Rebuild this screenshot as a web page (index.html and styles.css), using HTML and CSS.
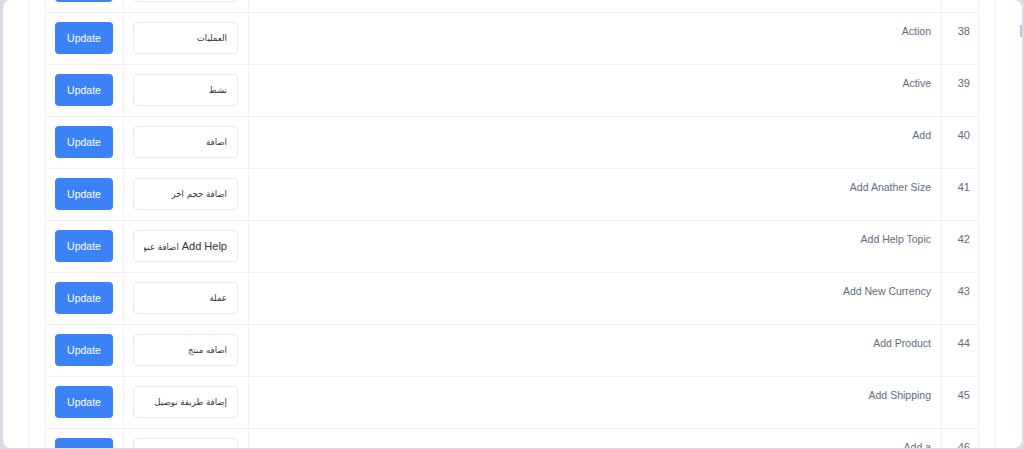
FILE: index.html
```html
<!DOCTYPE html>
<html lang="ar">
<head>
<meta charset="utf-8">
<title>Translations</title>
<link rel="stylesheet" href="styles.css">
</head>
<body>
<div class="page">
  <div class="card">
    <span class="thumb"></span>
    <div class="panel">
      <table class="grid" dir="rtl">
        <colgroup>
          <col class="col-num"><col class="col-label"><col class="col-input"><col class="col-btn">
        </colgroup>
        <tbody>
          <tr><td class="num">37</td><td class="label">Accept</td><td class="field"><div class="inp"><span class="ar">قبول</span></div></td><td class="act"><button class="btn">Update</button></td></tr>
          <tr><td class="num">38</td><td class="label">Action</td><td class="field"><div class="inp"><span class="ar">العمليات</span></div></td><td class="act"><button class="btn">Update</button></td></tr>
          <tr><td class="num">39</td><td class="label">Active</td><td class="field"><div class="inp"><span class="ar">نشط</span></div></td><td class="act"><button class="btn">Update</button></td></tr>
          <tr><td class="num">40</td><td class="label">Add</td><td class="field"><div class="inp"><span class="ar">اضافة</span></div></td><td class="act"><button class="btn">Update</button></td></tr>
          <tr><td class="num">41</td><td class="label">Add Anather Size</td><td class="field"><div class="inp"><span class="ar">اضافة حجم اخر</span></div></td><td class="act"><button class="btn">Update</button></td></tr>
          <tr><td class="num">42</td><td class="label">Add Help Topic</td><td class="field"><div class="inp"><span class="clip"><span class="lat">Add Help</span> <span class="ar">اضافة عنوان مساعدة</span></span></div></td><td class="act"><button class="btn">Update</button></td></tr>
          <tr><td class="num">43</td><td class="label">Add New Currency</td><td class="field"><div class="inp"><span class="ar">عملة</span></div></td><td class="act"><button class="btn">Update</button></td></tr>
          <tr><td class="num">44</td><td class="label">Add Product</td><td class="field"><div class="inp"><span class="ar">اضافه منتج</span></div></td><td class="act"><button class="btn">Update</button></td></tr>
          <tr><td class="num">45</td><td class="label">Add Shipping</td><td class="field"><div class="inp"><span class="ar">إضافة طريقة توصيل</span></div></td><td class="act"><button class="btn">Update</button></td></tr>
          <tr><td class="num">46</td><td class="label">Add a</td><td class="field"><div class="inp"></div></td><td class="act"><button class="btn">Update</button></td></tr>
        </tbody>
      </table>
    </div>
  </div>
</div>
</body>
</html>
```
FILE: styles.css
```css
html, body {
  margin: 0;
  padding: 0;
}
body {
  background: #d6dde4;
  font-family: "Liberation Sans", "DejaVu Sans", Arial, sans-serif;
  font-size: 10.5px;
  overflow: hidden;
}
.page {
  height: 449px;
  padding: 0 2px 1px 3px;
  box-sizing: border-box;
}
.card {
  position: relative;
  height: 448px;
  background: #fff;
  border-radius: 8px;
  overflow: hidden;
  padding: 0 26px 0 25px;
  box-sizing: border-box;
}
.thumb {
  position: absolute;
  right: 0;
  top: 25px;
  width: 2px;
  height: 12px;
  background: #c3c3c3;
}
.panel {
  display: flow-root;
  height: 100%;
  box-sizing: border-box;
  border-left: 1px solid #eef0f5;
  border-right: 1px solid #eef0f5;
  padding: 0 16px;
}
.grid {
  width: 934px;
  margin-top: -40px;
  border-collapse: collapse;
  table-layout: fixed;
  direction: rtl;
}
.col-num { width: 37px; }
.col-input { width: 125px; }
.col-btn { width: 78px; }
.grid td {
  border: 1px solid #eef0f5;
  padding: 9px 10px 10px 9px;
  vertical-align: top;
  height: 32px;
  box-sizing: content-box;
}
.grid td.num,
.grid td.label {
  text-align: right;
  color: #5d6c80;
  line-height: 16px;
  padding-top: 10px;
  padding-bottom: 9px;
}
.grid td.num {
  padding-right: 8px;
  font-size: 11px;
}
.grid td.field, .grid td.act {
  vertical-align: middle;
}
.inp {
  display: flex;
  align-items: center;
  justify-content: flex-start;
  height: 32px;
  box-sizing: border-box;
  border: 1px solid #e8ebf1;
  border-radius: 4px;
  padding: 0 10px;
  color: #333;
  direction: rtl;
  white-space: nowrap;
  overflow: hidden;
  background: #fff;
}
.clip {
  display: block;
  overflow: hidden;
  white-space: nowrap;
  min-width: 0;
}
.ar {
  font-family: "DejaVu Sans", sans-serif;
  font-size: 8.6px;
}
.lat {
  font-family: "Liberation Sans", Arial, sans-serif;
  font-size: 11px;
}
.btn {
  display: block;
  width: 58px;
  height: 32px;
  border: none;
  border-radius: 4px;
  background: #3b82f6;
  color: #fff;
  font-family: "Liberation Sans", Arial, sans-serif;
  font-size: 10.5px;
  padding: 0;
  cursor: pointer;
}
```
